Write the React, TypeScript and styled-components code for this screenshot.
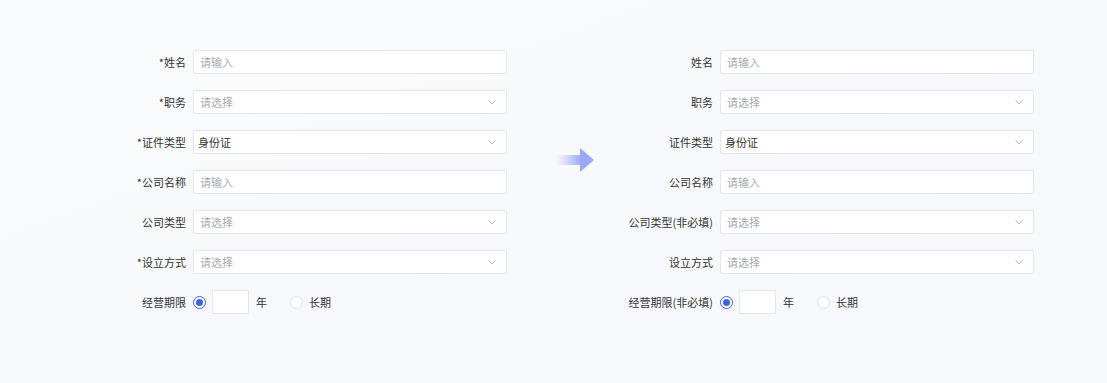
import React from "react";
import styled, { createGlobalStyle } from "styled-components";

const Global = createGlobalStyle`
  html, body {
    margin: 0;
    padding: 0;
    background: #f8f9fb;
  }
  body {
    font-family: "Noto Sans CJK SC", "Noto Sans", sans-serif;
    color: #333;
  }
`;

const Page = styled.div`
  width: 1107px;
  height: 383px;
  box-sizing: border-box;
  padding: 50px 0 0 106px;
  display: flex;
  align-items: flex-start;
  background: linear-gradient(160deg, #fafbfc 0%, #f7f8fb 60%, #f8f9fb 100%);
`;

const Form = styled.div<{ $labelWidth: number }>`
  display: grid;
  grid-template-columns: ${(p) => p.$labelWidth}px 314px;
  column-gap: 7px;
  row-gap: 16px;
  align-items: center;
`;

const Label = styled.div`
  font-size: 11px;
  line-height: 24px;
  text-align: right;
  white-space: nowrap;
  color: #333;
`;

const Field = styled.div<{ $filled?: boolean }>`
  height: 24px;
  box-sizing: border-box;
  background: #fff;
  border: 1px solid #e4e6ea;
  border-radius: 2px;
  padding: 0 10px 0 ${(p) => (p.$filled ? 4 : 6)}px;
  display: flex;
  align-items: center;
  justify-content: space-between;
  font-size: 11px;
  color: ${(p) => (p.$filled ? "#333" : "#a9abb0")};
`;

const Chevron = () => (
  <svg width="8" height="5" viewBox="0 0 8 5" fill="none">
    <path d="M0.5 0.5 L4 4 L7.5 0.5" stroke="#b8bbc2" strokeWidth="1" />
  </svg>
);

const PeriodRow = styled.div`
  display: flex;
  align-items: center;
  height: 24px;
  font-size: 11px;
  color: #333;
`;

const Radio = styled.span<{ $checked?: boolean }>`
  width: 13px;
  height: 13px;
  box-sizing: border-box;
  border-radius: 50%;
  border: 1px solid ${(p) => (p.$checked ? "#3e62d9" : "#dcdfe4")};
  background: #fff;
  display: inline-flex;
  align-items: center;
  justify-content: center;
  &::after {
    content: "";
    width: 7px;
    height: 7px;
    border-radius: 50%;
    background: ${(p) => (p.$checked ? "#3e62d9" : "transparent")};
  }
`;

const YearBox = styled.span`
  width: 37px;
  height: 24px;
  box-sizing: border-box;
  background: #fff;
  border: 1px solid #e4e6ea;
  margin: 0 7px 0 6px;
`;

const Unit = styled.span`
  margin-right: 23px;
`;

const RadioText = styled.span`
  margin-left: 6px;
`;

const ArrowCell = styled.div`
  margin: 98px 19px 0 49px;
  width: 38px;
  height: 24px;
`;

const Arrow = () => (
  <svg width="38" height="24" viewBox="0 0 38 24">
    <defs>
      <linearGradient id="shaft" x1="0" y1="0" x2="1" y2="0">
        <stop offset="0" stopColor="#a9b8fb" stopOpacity="0" />
        <stop offset="1" stopColor="#9aacfb" stopOpacity="1" />
      </linearGradient>
    </defs>
    <rect x="0" y="7" width="25" height="10" fill="url(#shaft)" />
    <path d="M24 0 L38 12 L24 24 Z" fill="#98abfb" />
  </svg>
);

type Row = { label: string; value?: string; placeholder?: string; select?: boolean };

const leftRows: Row[] = [
  { label: "*姓名", placeholder: "请输入" },
  { label: "*职务", placeholder: "请选择", select: true },
  { label: "*证件类型", value: "身份证", select: true },
  { label: "*公司名称", placeholder: "请输入" },
  { label: "公司类型", placeholder: "请选择", select: true },
  { label: "*设立方式", placeholder: "请选择", select: true },
];

const rightRows: Row[] = [
  { label: "姓名", placeholder: "请输入" },
  { label: "职务", placeholder: "请选择", select: true },
  { label: "证件类型", value: "身份证", select: true },
  { label: "公司名称", placeholder: "请输入" },
  { label: "公司类型(非必填)", placeholder: "请选择", select: true },
  { label: "设立方式", placeholder: "请选择", select: true },
];

const FormBlock = ({ rows, periodLabel, labelWidth }: { rows: Row[]; periodLabel: string; labelWidth: number }) => (
  <Form $labelWidth={labelWidth}>
    {rows.map((r) => (
      <React.Fragment key={r.label}>
        <Label>{r.label}</Label>
        <Field $filled={!!r.value}>
          <span>{r.value ?? r.placeholder}</span>
          {r.select && <Chevron />}
        </Field>
      </React.Fragment>
    ))}
    <Label>{periodLabel}</Label>
    <PeriodRow>
      <Radio $checked />
      <YearBox />
      <Unit>年</Unit>
      <Radio />
      <RadioText>长期</RadioText>
    </PeriodRow>
  </Form>
);

export default function App() {
  return (
    <>
      <Global />
      <Page>
        <FormBlock rows={leftRows} periodLabel="经营期限" labelWidth={80} />
        <ArrowCell>
          <Arrow />
        </ArrowCell>
        <FormBlock rows={rightRows} periodLabel="经营期限(非必填)" labelWidth={100} />
      </Page>
    </>
  );
}
